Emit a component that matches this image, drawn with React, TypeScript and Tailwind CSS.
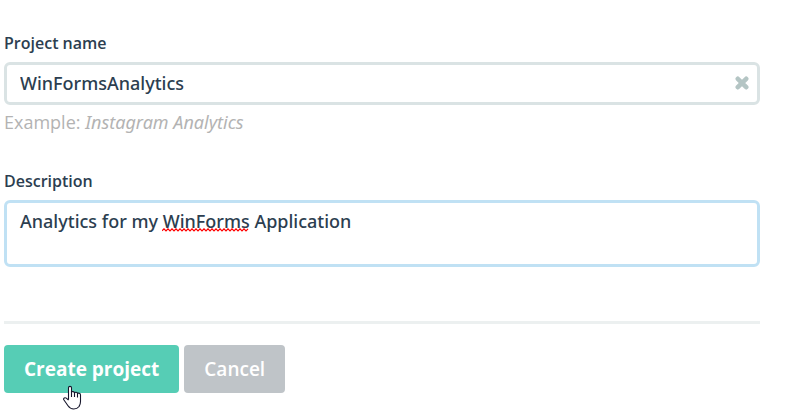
import { useState } from "react";
import type { ReactNode } from "react";

function FieldLabel({ htmlFor, children }: { htmlFor: string; children: ReactNode }) {
  return (
    <label htmlFor={htmlFor} className="mb-[7px] block text-base leading-6 font-semibold">
      {children}
    </label>
  );
}

function ClearIcon() {
  return (
    <svg viewBox="0 0 14 14" className="block size-3.5" aria-hidden="true">
      <path d="M2.8 2.8 L11.2 11.2 M11.2 2.8 L2.8 11.2" stroke="#b4c5c4" strokeWidth="4.6" fill="none" strokeLinecap="round" />
    </svg>
  );
}

function SpellingMark() {
  const points = Array.from({ length: 44 }, (_, i) => `${i * 2},${i % 2 ? 0.8 : 2.8}`).join(" ");
  return (
    <svg
      viewBox="0 0 87 4"
      className="pointer-events-none absolute top-7 left-[158px] h-1 w-[87px]"
      aria-hidden="true"
    >
      <polyline points={points} fill="none" stroke="#ff0000" strokeWidth="1.2" />
    </svg>
  );
}

function HandPointer() {
  return (
    <svg
      viewBox="0 0 20 25"
      className="pointer-events-none absolute top-10 left-[59px] z-10 h-[25px] w-5"
      aria-hidden="true"
    >
      <path
        d="M5.5 14.5 V2.8 C5.5 0.9 8.5 0.9 8.5 2.8 V7.2 C9 6.2 11.3 6.4 11.5 7.8 C12.2 6.9 14.3 7.2 14.5 8.5 C15.4 7.8 17.5 8.3 17.5 10 V16.5 C17.5 19.5 16.5 20.5 15.8 21.8 C14.6 23.5 12.8 24 10.8 24 C8.2 24 6.4 23 5 20.8 L0.8 14.8 C0 13.3 2 12.2 3.3 13.1 L5.5 15.2"
        fill="#ffffff"
        stroke="#15152b"
        strokeWidth="1.1"
        strokeLinejoin="round"
      />
      <path d="M8.5 6.5 V12 M11.5 7.8 V12 M14.5 8.5 V12.5" stroke="#15152b" strokeWidth="1.1" fill="none" />
    </svg>
  );
}

export default function App() {
  const [name, setName] = useState("WinFormsAnalytics");
  const [description, setDescription] = useState("Analytics for my WinForms Application");

  return (
    <main className="min-h-screen bg-white pt-[31px] pr-8 pl-1 font-['Open_Sans',sans-serif] text-[#2c3e50]">
      <form onSubmit={(e) => e.preventDefault()}>
        <FieldLabel htmlFor="project-name">Project name</FieldLabel>
        <div className="flex h-[43px] items-center rounded-md border-3 border-[#dae3e4] pr-2 pb-0.5 pl-[13px]">
          <input
            id="project-name"
            type="text"
            value={name}
            onChange={(e) => setName(e.target.value)}
            className="min-w-0 flex-1 bg-transparent font-['Noto_Sans',sans-serif] text-lg leading-6 font-medium outline-none"
          />
          <button type="button" aria-label="Clear project name" onClick={() => setName("")}>
            <ClearIcon />
          </button>
        </div>
        <p className="mt-[3px] text-lg leading-7 text-[#b3b3b3]">
          Example: <em className="font-['Noto_Sans',sans-serif]">Instagram Analytics</em>
        </p>

        <div className="mt-[33px]">
          <FieldLabel htmlFor="description">Description</FieldLabel>
          <div className="relative">
            <textarea
              id="description"
              value={description}
              spellCheck={false}
              onChange={(e) => setDescription(e.target.value)}
              className="block h-[67px] w-full resize-none rounded-md border-3 border-[#c0e1f4] bg-white px-[13px] py-1.5 font-['Noto_Sans',sans-serif] text-lg leading-6 font-medium outline-none"
            />
            {description.includes("WinForms") && <SpellingMark />}
          </div>
        </div>

        <hr className="mt-[54px] border-t-3 border-[#ecf0f0]" />

        <div className="relative mt-[21px] flex gap-[5px]">
          <button type="submit" className="h-12 rounded bg-[#56cdb5] px-5 text-[19px] leading-6 font-bold text-white">
            Create project
          </button>
          <button type="button" className="h-12 rounded bg-[#bfc4c8] px-5 text-[19px] leading-6 font-semibold text-white">
            Cancel
          </button>
          <HandPointer />
        </div>
      </form>
    </main>
  );
}
